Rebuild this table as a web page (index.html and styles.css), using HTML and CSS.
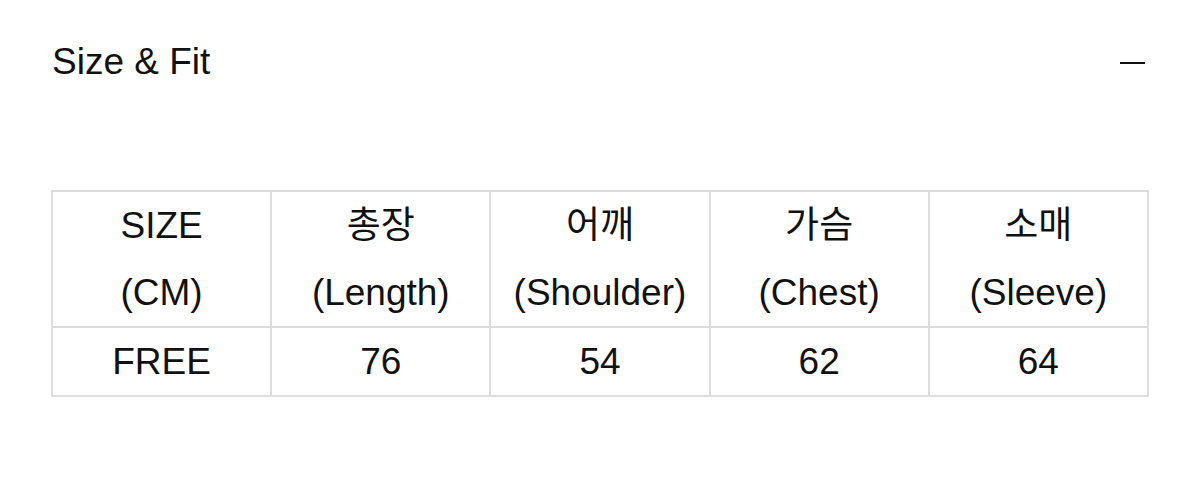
FILE: index.html
```html
<!DOCTYPE html>
<html lang="ko">
<head>
<meta charset="utf-8">
<title>Size &amp; Fit</title>
<link rel="stylesheet" href="styles.css">
</head>
<body>
<section class="panel">
  <div class="panel-header">
    <h2 class="panel-title">Size &amp; Fit</h2>
    <span class="collapse-icon" aria-label="collapse"></span>
  </div>
  <table class="size-table">
    <tr class="head-row">
      <td>SIZE<br>(CM)</td>
      <td>총장<br>(Length)</td>
      <td>어깨<br>(Shoulder)</td>
      <td>가슴<br>(Chest)</td>
      <td>소매<br>(Sleeve)</td>
    </tr>
    <tr class="data-row">
      <td>FREE</td>
      <td>76</td>
      <td>54</td>
      <td>62</td>
      <td>64</td>
    </tr>
  </table>
</section>
</body>
</html>
```
FILE: styles.css
```css
html, body {
  margin: 0;
  padding: 0;
  background: #ffffff;
}
body {
  font-family: "Liberation Sans", "Noto Sans CJK KR", sans-serif;
  color: #111111;
}
.panel {
  padding: 40px 55px 0 51px;
}
.panel-header {
  display: flex;
  justify-content: space-between;
  align-items: center;
  height: 44px;
  padding-left: 1px;
}
.panel-title {
  margin: 0;
  font-size: 37px;
  font-weight: normal;
  line-height: 44px;
  letter-spacing: 0;
}
.collapse-icon {
  display: block;
  width: 25px;
  height: 2px;
  background: #111111;
  margin-top: 2px;
}
.size-table {
  margin-top: 106px;
  width: 1098px;
  border-collapse: separate;
  border-spacing: 0;
  border: 1px solid #dddddd;
  table-layout: fixed;
}
.size-table td {
  border: 1px solid #dddddd;
  text-align: center;
  font-size: 37px;
  line-height: 66px;
  padding: 0;
  font-family: "Liberation Sans", "Noto Sans CJK KR", sans-serif;
}
.head-row td {
  padding: 1px 0 0 0;
  line-height: 66.5px;
  height: 132px;
}
.data-row td {
  padding-top: 1px;
  height: 66px;
}
```
